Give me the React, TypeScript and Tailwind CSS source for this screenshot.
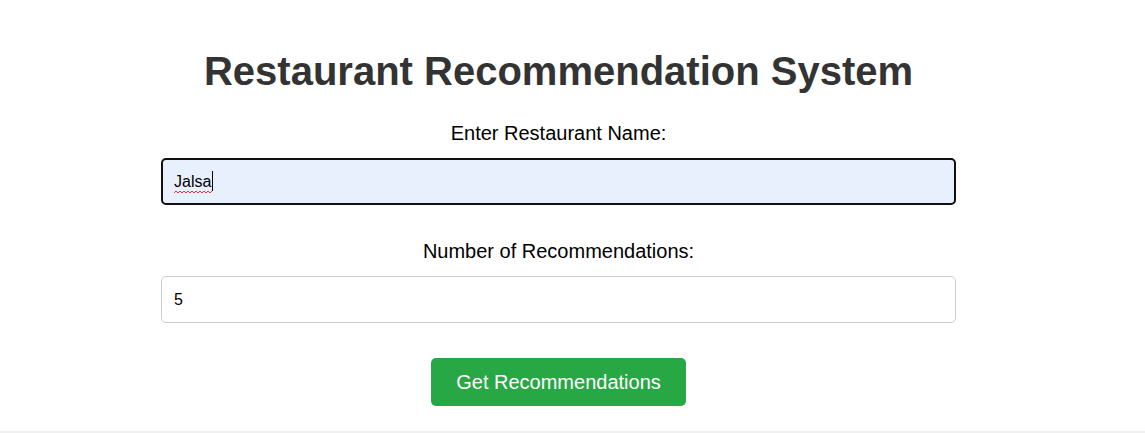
import { useState } from 'react'

const App = () => {
  const [name, setName] = useState('Jalsa')
  const [count, setCount] = useState('5')

  return (
    <div className="min-h-screen bg-white font-['Liberation_Sans',Arial,sans-serif]">
      <div className="h-[431px] flex">
        <form
          className="ml-[161px] w-[795px] pt-[48px] flex flex-col items-center"
          onSubmit={(e) => e.preventDefault()}
        >
          <h1 className="text-[40px] leading-[46px] font-bold text-[#333]">
            Restaurant Recommendation System
          </h1>

          {/* Restaurant name */}
          <label htmlFor="restaurant" className="mt-[29px] text-[20px] leading-[21px] text-black">
            Enter Restaurant Name:
          </label>
          <div className="relative mt-[14px] w-full">
            <input
              id="restaurant"
              value={name}
              onChange={(e) => setName(e.target.value)}
              className="w-full h-[47px] px-[11px] text-[16px] text-black bg-[#e8f0fe] border-2 border-[#101010] rounded-[5px] outline-none"
            />
            {/* spellcheck squiggle + caret */}
            <svg className="absolute left-[13px] top-[32px] pointer-events-none" width="38" height="4" viewBox="0 0 38 4">
              <path d="M0 3 L2 1 L4 3 L6 1 L8 3 L10 1 L12 3 L14 1 L16 3 L18 1 L20 3 L22 1 L24 3 L26 1 L28 3 L30 1 L32 3 L34 1 L36 3 L38 1" fill="none" stroke="#e53935" strokeWidth="1" />
            </svg>
            <div className="absolute left-[51px] top-[13px] w-px h-[20px] bg-black pointer-events-none" />
          </div>

          {/* Count */}
          <label htmlFor="count" className="mt-[36px] text-[20px] leading-[21px] text-black">
            Number of Recommendations:
          </label>
          <input
            id="count"
            type="number"
            value={count}
            onChange={(e) => setCount(e.target.value)}
            className="mt-[14px] w-full h-[47px] px-[12px] text-[16px] text-black bg-white border border-[#ccc] rounded-[5px] outline-none [appearance:textfield] [&::-webkit-inner-spin-button]:appearance-none"
          />

          <button
            type="submit"
            className="mt-[35px] h-[48px] px-[25px] rounded-[5px] bg-[#28a745] text-white text-[20px]"
          >
            Get Recommendations
          </button>
        </form>
      </div>
      <div className="h-[2px] bg-[#f0f0f0]" />
    </div>
  )
}

export default App
